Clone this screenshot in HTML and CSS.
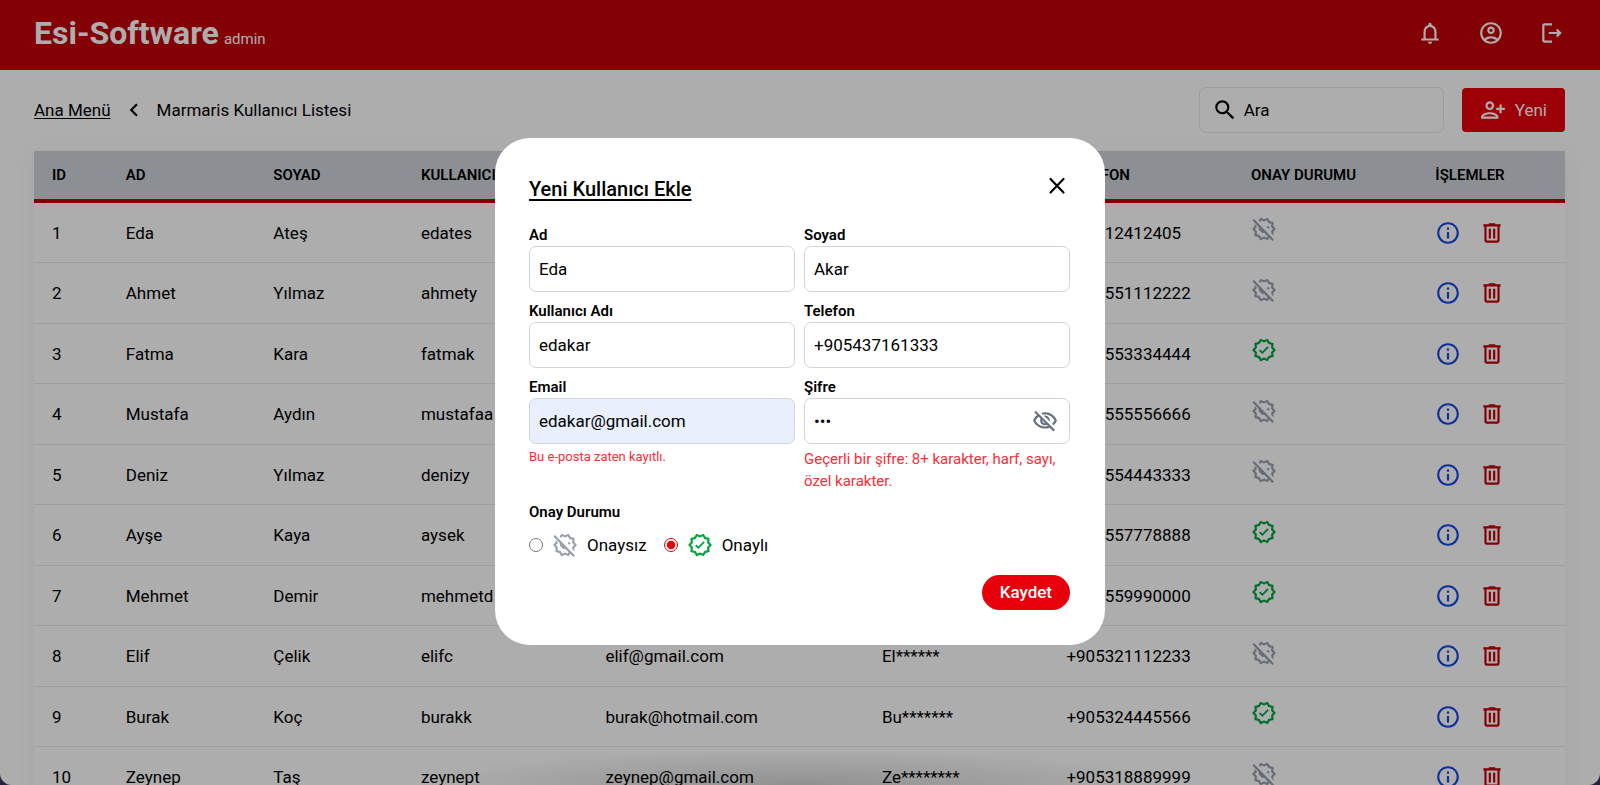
FILE: index.html
```
<!DOCTYPE html>
<html lang="tr">
<head>
<meta charset="utf-8">
<meta name="viewport" content="width=device-width, initial-scale=1">
<title>Esi-Software admin</title>
<link rel="stylesheet" href="styles.css">
</head>
<body>
<svg class="sprite" aria-hidden="true">
  <symbol id="i-bell" viewBox="0 0 24 24"><path d="M12 22c1.1 0 2-.9 2-2h-4c0 1.1.9 2 2 2zm6-5v-6c0-3.07-1.63-5.64-4.500-6.320V4c0-.83-.67-1.500-1.500-1.500s-1.500.67-1.500 1.500v.68C7.640 5.360 6 7.920 6 11v6H4v2h16v-2h-2zm-2 0H8v-6c0-2.480 1.510-4.500 4-4.500s4 2.020 4 4.500v6z"/></symbol>
  <symbol id="i-account" viewBox="0 0 24 24"><path d="M12 2C6.48 2 2 6.48 2 12s4.480 10 10 10 10-4.480 10-10S17.520 2 12 2zM7.350 18.500C8.660 17.560 10.260 17 12 17s3.340.56 4.650 1.500C15.340 19.440 13.740 20 12 20s-3.340-.56-4.650-1.500zm10.790-1.380C16.450 15.800 14.320 15 12 15s-4.450.8-6.140 2.120C4.700 15.730 4 13.950 4 12c0-4.420 3.580-8 8-8s8 3.580 8 8c0 1.950-.7 3.730-1.860 5.120zM12 6c-1.930 0-3.500 1.570-3.500 3.500S10.070 13 12 13s3.500-1.570 3.500-3.500S13.930 6 12 6zm0 5c-.83 0-1.500-.67-1.500-1.500S11.170 8 12 8s1.500.67 1.500 1.500S12.830 11 12 11z"/></symbol>
  <symbol id="i-logout" viewBox="0 0 24 24"><path d="M17 8l-1.410 1.410L17.170 11H9v2h8.170l-1.580 1.580L17 16l4-4zM5 5h7V3H5c-1.100 0-2 .9-2 2v14c0 1.100.9 2 2 2h7v-2H5z"/></symbol>
  <symbol id="i-chevron" viewBox="0 0 24 24"><path d="M15.410 7.410L14 6l-6 6 6 6 1.410-1.410L10.830 12z"/></symbol>
  <symbol id="i-search" viewBox="0 0 24 24"><path d="M15.500 14h-.79l-.28-.27A6.471 6.471 0 0 0 16 9.500 6.500 6.500 0 1 0 9.500 16c1.610 0 3.090-.59 4.230-1.570l.27.28v.79l5 4.990L20.490 19l-4.990-5zm-6 0C7.010 14 5 11.990 5 9.500S7.010 5 9.500 5 14 7.010 14 9.500 11.990 14 9.500 14z"/></symbol>
  <symbol id="i-adduser" viewBox="0 0 24 24"><path d="M13 8c0-2.210-1.790-4-4-4S5 5.790 5 8s1.790 4 4 4 4-1.790 4-4zm-2 0c0 1.100-.9 2-2 2s-2-.9-2-2 .9-2 2-2 2 .9 2 2zM1 18v2h16v-2c0-2.660-5.330-4-8-4s-8 1.340-8 4zm2 0c.2-.71 3.300-2 6-2 2.690 0 5.770 1.280 6 2H3zm17-3v-3h3v-2h-3V7h-2v3h-3v2h3v3z"/></symbol>
  <symbol id="i-info" viewBox="0 0 24 24"><path d="M11 7h2v2h-2zm0 4h2v6h-2zm1-9C6.480 2 2 6.480 2 12s4.480 10 10 10 10-4.480 10-10S17.520 2 12 2zm0 18c-4.410 0-8-3.590-8-8s3.590-8 8-8 8 3.590 8 8-3.590 8-8 8z"/></symbol>
  <symbol id="i-trash" viewBox="0 0 24 24"><path d="M7 21q-.825 0-1.412-.587T5 19V6H4V4h5V3h6v1h5v2h-1v13q0 .825-.587 1.413T17 21zM17 6H7v13h10zM9 17h2V8H9zm4 0h2V8h-2z"/></symbol>
  <symbol id="i-verified" viewBox="0 0 24 24"><path d="M23 11.990l-2.440-2.790.34-3.690-3.610-.82L15.400 1.500 12 2.960 8.600 1.500 6.710 4.690 3.100 5.500l.34 3.700L1 11.990l2.440 2.790-.34 3.700 3.610.82 1.890 3.200 3.400-1.470 3.400 1.460 1.890-3.190 3.610-.82-.34-3.690L23 11.990zm-3.950 1.480l-.56.65.08.85.18 1.950-1.900.43-.84.19-.44.74-.99 1.680-1.780-.77-.8-.34-.79.34-1.780.77-.99-1.670-.44-.74-.84-.19-1.900-.43.18-1.960.08-.85-.56-.65L3.670 12l1.290-1.480.56-.65-.09-.86-.18-1.940 1.900-.43.84-.19.44-.74.99-1.680 1.780.77.8.34.79-.34 1.780-.77.99 1.680.44.74.84.19 1.900.43-.18 1.950-.08.85.56.65 1.290 1.470-1.280 1.480z"/><path d="M10.090 13.750l-2.320-2.330-1.480 1.490 3.800 3.810 7.340-7.360-1.480-1.490z" transform="translate(2.300 2.200) scale(.81)"/></symbol>
  <symbol id="i-unverified" viewBox="0 0 24 24"><path d="M8.600 1.500l3.400 1.460 3.400-1.460 1.890 3.190 3.610.82-.34 3.690L23 11.990l-2.440 2.790.3 3.200-1.850-1.850-.52-2.010 1.840-2.130-1.840-2.120.26-2.800-2.740-.62L14.570 4.020 12 5.130 9.430 4.020l-.9 1.520L7.100 4.050zM3.100 7.150l2.100 2.100.31.620L3.670 12l1.850 2.120-.26 2.810 2.740.62 1.430 2.420L12 18.860l2.570 1.110 1.300-2.180 1.450 1.450-1.920 3.250L12 21.030 8.600 22.500l-1.890-3.200-3.610-.82.340-3.700L1 11.990 3.440 9.200z"/><path d="M2.810 2.810L1.390 4.220l5.600 5.600 0 1.200.55 1.950 2.820 2.800 1.750-.3 7.670 7.670 1.410-1.410z"/><path d="M14.400 10.300l1.420-1.410 1.410 1.410-1.410 1.420z"/></symbol>
  <symbol id="i-eyeoff" viewBox="0 0 24 24"><path d="M12 6c3.790 0 7.170 2.130 8.820 5.500-.59 1.220-1.420 2.270-2.410 3.120l1.410 1.410c1.390-1.230 2.490-2.770 3.180-4.530C21.270 7.110 17 4 12 4c-1.270 0-2.490.2-3.640.57l1.650 1.650C10.660 6.090 11.320 6 12 6zm-1.070 1.140L13 9.210c.57.25 1.030.71 1.280 1.280l2.070 2.070c.08-.34.14-.7.14-1.070C16.500 9.010 14.480 7 12 7c-.37 0-.72.05-1.070.14zM2.010 3.870l2.680 2.680C3.060 7.830 1.770 9.530 1 11.500 2.730 15.890 7 19 12 19c1.520 0 2.980-.29 4.320-.82l3.420 3.420 1.410-1.410L3.420 2.450 2.010 3.870zm7.500 7.500l2.610 2.610c-.04.01-.08.02-.12.02-1.380 0-2.500-1.120-2.500-2.500 0-.05.01-.08.01-.13zm-3.400-3.400l1.750 1.750c-.23.55-.36 1.150-.36 1.780 0 2.480 2.020 4.500 4.500 4.500.63 0 1.230-.13 1.770-.36l.98.98c-.88.24-1.800.38-2.750.38-3.790 0-7.170-2.130-8.820-5.500.7-1.430 1.720-2.610 2.930-3.530z"/></symbol>
  <symbol id="i-close" viewBox="0 0 24 24"><path d="M6 5.500l12 12.500m0-12.500l-12 12.500" fill="none" stroke="currentColor" stroke-width="2" stroke-linecap="round"/></symbol>
</svg>

<header class="topbar">
  <div class="brand"><h1 class="brand-name">Esi-Software</h1><span class="brand-role">admin</span></div>
  <nav class="topbar-actions">
    <button class="icon-btn" type="button" aria-label="Bildirimler"><svg class="icon"><use href="#i-bell"/></svg></button>
    <button class="icon-btn" type="button" aria-label="Hesap"><svg class="icon"><use href="#i-account"/></svg></button>
    <button class="icon-btn" type="button" aria-label="Çıkış"><svg class="icon"><use href="#i-logout"/></svg></button>
  </nav>
</header>

<main class="page">
  <div class="toolbar">
    <nav class="crumbs">
      <a href="#">Ana Menü</a>
      <svg class="icon"><use href="#i-chevron"/></svg>
      <span>Marmaris Kullanıcı Listesi</span>
    </nav>
    <div class="tools">
      <label class="search"><svg class="icon"><use href="#i-search"/></svg><input type="text" placeholder="Ara" aria-label="Ara"></label>
      <button class="new-btn" type="button"><svg class="icon"><use href="#i-adduser"/></svg>Yeni</button>
    </div>
  </div>

  <table class="users">
    <colgroup><col class="w4"><col class="w8"><col class="w8"><col class="w10"><col class="w15"><col class="w10"><col class="w10"><col class="w10"><col class="w8"></colgroup>
    <thead>
      <tr><th>ID</th><th>AD</th><th>SOYAD</th><th>KULLANICI ADI</th><th>EMAIL</th><th>ŞİFRE</th><th>TELEFON</th><th>ONAY DURUMU</th><th>İŞLEMLER</th></tr>
    </thead>
    <tbody id="rows"></tbody>
  </table>
</main>

<div class="overlay">
  <form class="dialog" role="dialog" aria-labelledby="dialog-title">
    <div class="dialog-head">
      <h2 class="dialog-title" id="dialog-title">Yeni Kullanıcı Ekle</h2>
      <button class="icon-btn" type="button" aria-label="Kapat"><svg class="icon"><use href="#i-close"/></svg></button>
    </div>
    <div class="fields">
      <div class="field"><label for="ad">Ad</label><input id="ad" type="text" value="Eda"></div>
      <div class="field"><label for="soyad">Soyad</label><input id="soyad" type="text" value="Akar"></div>
      <div class="field"><label for="kadi">Kullanıcı Adı</label><input id="kadi" type="text" value="edakar"></div>
      <div class="field"><label for="tel">Telefon</label><input id="tel" type="tel" value="+905437161333"></div>
      <div class="field"><label for="email">Email</label><input id="email" class="filled" type="email" value="edakar@gmail.com"><p class="error error-small">Bu e-posta zaten kayıtlı.</p></div>
      <div class="field"><label for="sifre">Şifre</label>
        <div class="password"><input id="sifre" type="password" value="abc"><button class="icon-btn reveal" type="button" aria-label="Şifreyi göster"><svg class="icon"><use href="#i-eyeoff"/></svg></button></div>
        <p class="error">Geçerli bir şifre: 8+ karakter, harf, sayı, özel karakter.</p></div>
    </div>
    <fieldset class="approval">
      <legend>Onay Durumu</legend>
      <div class="options">
        <label class="option"><input type="radio" name="onay"><svg class="icon off"><use href="#i-unverified"/></svg>Onaysız</label>
        <label class="option"><input type="radio" name="onay" checked><svg class="icon on"><use href="#i-verified"/></svg>Onaylı</label>
      </div>
    </fieldset>
    <div class="dialog-foot"><button class="save-btn" type="submit">Kaydet</button></div>
  </form>
</div>
<script src="app.js"></script>
</body>
</html>
```
FILE: styles.css
```
* { box-sizing: border-box; }

html { background: #23243a; }

body {
  margin: 0;
  height: 100vh;
  overflow: hidden;
  border-radius: 0 0 12px 12px;
  background: #fff;
  color: #000;
  font: 17px/26px Roboto, "Liberation Sans", sans-serif;
}

h1, h2, p, fieldset { margin: 0; padding: 0; border: 0; }
button, input { font: inherit; color: inherit; }
button { padding: 0; border: 0; background: none; cursor: pointer; }
.sprite { position: absolute; width: 0; height: 0; }
.icon { display: block; flex: none; width: 26px; height: 26px; fill: currentColor; }
.icon-btn { display: block; }
.on { color: #00a63e; }
.off { color: #99a1af; }

.topbar {
  display: flex;
  justify-content: space-between;
  align-items: center;
  height: 70px;
  padding: 0 35px 4px 34px;
  background: #c10007;
  color: #fff;
}
.brand { display: flex; align-items: baseline; gap: 5px; }
.brand-name { font-size: 32px; line-height: 40px; font-weight: 700; }
.brand-role { font-size: 15px; }
.topbar-actions { display: flex; gap: 35px; }

.page { padding: 17px 35px 0 34px; }
.toolbar { display: flex; justify-content: space-between; align-items: center; margin-bottom: 18px; }
.crumbs { display: flex; align-items: center; gap: 10px; }
.crumbs a { color: inherit; text-underline-offset: 2px; }
.tools { display: flex; align-items: center; gap: 18px; }
.search {
  display: flex;
  align-items: center;
  gap: 4px;
  width: 245px;
  height: 46px;
  padding: 0 12px;
  border: 1px solid #e5e7eb;
  border-radius: 7px;
}
.search input { flex: 1; min-width: 0; padding: 0 2px; border: 0; outline: 0; background: none; }
.search input::placeholder { color: #000; opacity: 1; }
.new-btn {
  display: flex;
  align-items: center;
  gap: 9px;
  height: 44px;
  padding: 0 18px;
  border-radius: 4px;
  background: #e7000b;
  color: #fff;
}

.users {
  width: 100%;
  table-layout: fixed;
  border-collapse: separate;
  border-spacing: 0;
  box-shadow: 0 4px 20px rgba(0, 0, 0, 0.05);
}
.w4 { width: 4.82%; }
.w8 { width: 9.64%; }
.w10 { width: 12.05%; }
.w15 { width: 18.06%; }
.users th, .users td { padding: 0 0 0 18px; text-align: left; white-space: nowrap; }
.users th { height: 52px; padding-bottom: 1px; background: #cfd5db; border-bottom: 4px solid #c10007; font-size: 15px; font-weight: 600; }
.users td { height: 60px; border-bottom: 1px solid #e5e7eb; }
.users tr:nth-child(even) td { height: 61px; }
.users .status { padding-bottom: 7px; }
.row-actions { display: flex; gap: 18px; }
.info { color: #1447e6; }
.trash { color: #c10007; }

.overlay {
  position: fixed;
  inset: 0;
  display: flex;
  justify-content: center;
  align-items: center;
  padding-bottom: 3px;
  border-radius: 0 0 12px 12px;
  background:
    radial-gradient(ellipse 24% 36px at 50% 100%, rgba(0, 0, 0, 0.16), transparent),
    rgba(0, 0, 0, 0.32);
}
.dialog {
  width: 610px;
  padding: 35px 35px 35px 34px;
  border-radius: 35px;
  background: #fff;
}
.dialog-head { display: flex; justify-content: space-between; align-items: flex-start; margin-bottom: 21px; }
.dialog-title { padding-top: 2px; font-size: 20px; line-height: 28px; font-weight: 500; text-decoration: underline; text-underline-offset: 3px; }
.fields { display: grid; grid-template-columns: 1fr 1fr; gap: 8px 9px; }
.field label, .approval legend { display: block; font-size: 15px; line-height: 22px; font-weight: 600; padding: 0; }
.field input {
  display: block;
  width: 100%;
  height: 46px;
  padding: 0 9px;
  border: 1px solid #d1d5dc;
  border-radius: 7px;
  outline: 0;
  background: #fff;
}
.field .filled { background: #e8f0fe; }
.password { position: relative; }
.reveal { position: absolute; right: 12px; top: 10px; color: #6a7282; }
.error { margin-top: 4px; color: #fb2c36; font-size: 15px; line-height: 22px; }
.error-small { font-size: 13px; line-height: 18px; }
.approval { margin-top: 9px; }
.options { display: flex; gap: 17px; margin-top: 9px; }
.option { display: flex; align-items: center; gap: 9px; }
.option input { width: 14px; height: 14px; margin: 0; accent-color: #e7000b; }
.dialog-foot { display: flex; justify-content: flex-end; margin-top: 17px; }
.save-btn { height: 35px; padding: 0 18px; border-radius: 18px; background: #e7000b; color: #fff; font-weight: 500; }
```
FILE: app.js
```
const users = [
  ["Eda", "Ateş", "edates", "eda@gmail.com", "Ed******", "+90512412405", false],
  ["Ahmet", "Yılmaz", "ahmety", "ahmet@gmail.com", "Ah******", "+905551112222", false],
  ["Fatma", "Kara", "fatmak", "fatma@gmail.com", "Fa******", "+905553334444", true],
  ["Mustafa", "Aydın", "mustafaa", "mustafa@gmail.com", "Mu******", "+905555556666", false],
  ["Deniz", "Yılmaz", "denizy", "deniz@gmail.com", "De******", "+905554443333", false],
  ["Ayşe", "Kaya", "aysek", "ayse@gmail.com", "Ay******", "+905557778888", true],
  ["Mehmet", "Demir", "mehmetd", "mehmet@gmail.com", "Me******", "+905559990000", true],
  ["Elif", "Çelik", "elifc", "elif@gmail.com", "El******", "+905321112233", false],
  ["Burak", "Koç", "burakk", "burak@hotmail.com", "Bu*******", "+905324445566", true],
  ["Zeynep", "Taş", "zeynept", "zeynep@gmail.com", "Ze********", "+905318889999", false]
];
const icon = (name, cls = "") => `<svg class="icon ${cls}"><use href="#i-${name}"/></svg>`;
document.getElementById("rows").innerHTML = users.map((user, i) => {
  const approved = user[6];
  const cells = [i + 1, ...user.slice(0, 6)].map(text => `<td>${text}</td>`).join("");
  return `<tr>${cells}
    <td class="status">${approved ? icon("verified", "on") : icon("unverified", "off")}</td>
    <td><div class="row-actions">
      <button class="icon-btn info" type="button" aria-label="Bilgi">${icon("info")}</button>
      <button class="icon-btn trash" type="button" aria-label="Sil">${icon("trash")}</button>
    </div></td></tr>`;
}).join("");
```
